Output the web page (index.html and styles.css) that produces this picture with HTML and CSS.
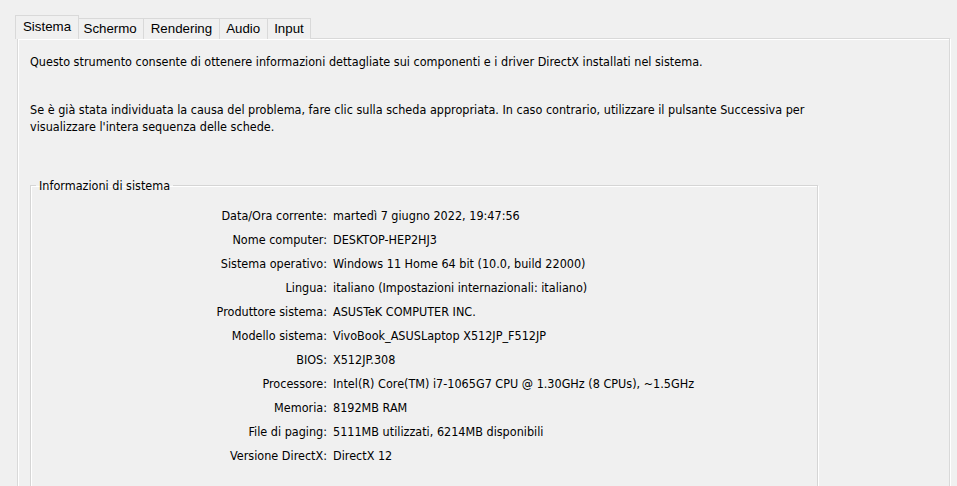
FILE: index.html
```html
<!DOCTYPE html>
<html lang="it">
<head>
<meta charset="utf-8">
<title>Strumento di diagnostica DirectX</title>
<link rel="stylesheet" href="styles.css">
</head>
<body>
<div class="window">
  <div class="tabs">
    <div class="tab active">Sistema</div>
    <div class="tab">Schermo</div>
    <div class="tab">Rendering</div>
    <div class="tab">Audio</div>
    <div class="tab">Input</div>
  </div>
  <div class="panel">
    <p class="intro">Questo strumento consente di ottenere informazioni dettagliate sui componenti e i driver DirectX installati nel sistema.</p>
    <p class="intro second">Se è già stata individuata la causa del problema, fare clic sulla scheda appropriata. In caso contrario, utilizzare il pulsante Successiva per<br>visualizzare l'intera sequenza delle schede.</p>
    <fieldset class="group">
      <legend>Informazioni di sistema</legend>
      <div class="info">
        <span class="label">Data/Ora corrente:</span><span class="value">martedì 7 giugno 2022, 19:47:56</span>
        <span class="label">Nome computer:</span><span class="value">DESKTOP-HEP2HJ3</span>
        <span class="label">Sistema operativo:</span><span class="value">Windows 11 Home 64 bit (10.0, build 22000)</span>
        <span class="label">Lingua:</span><span class="value">italiano (Impostazioni internazionali: italiano)</span>
        <span class="label">Produttore sistema:</span><span class="value">ASUSTeK COMPUTER INC.</span>
        <span class="label">Modello sistema:</span><span class="value">VivoBook_ASUSLaptop X512JP_F512JP</span>
        <span class="label">BIOS:</span><span class="value">X512JP.308</span>
        <span class="label">Processore:</span><span class="value">Intel(R) Core(TM) i7-1065G7 CPU @ 1.30GHz (8 CPUs), ~1.5GHz</span>
        <span class="label">Memoria:</span><span class="value">8192MB RAM</span>
        <span class="label">File di paging:</span><span class="value">5111MB utilizzati, 6214MB disponibili</span>
        <span class="label">Versione DirectX:</span><span class="value">DirectX 12</span>
      </div>
    </fieldset>
  </div>
</div>
</body>
</html>
```
FILE: styles.css
```css
html, body {
  margin: 0;
  padding: 0;
  background: #f0f0f0;
  overflow: hidden;
  height: 486px;
}

.window {
  padding-top: 15px;
  font-family: "DejaVu Sans Condensed", "DejaVu Sans", sans-serif;
  font-size: 12.5px;
  color: #000;
}

.tabs {
  display: flex;
  align-items: flex-end;
  margin-left: 15px;
  height: 24px;
  position: relative;
  z-index: 2;
  font-family: "Liberation Sans", Arial, sans-serif;
  font-size: 13.3px;
}

.tab {
  box-sizing: border-box;
  height: 21px;
  line-height: 20px;
  padding: 0 6.5px;
  border: 1px solid #d9d9d9;
  border-bottom: none;
  margin-left: -1px;
  background: #f0f0f0;
}

.tab.active {
  height: 24px;
  line-height: 22px;
  margin-left: 0;
  margin-right: -2px;
  padding: 0 7px;
  position: relative;
  z-index: 3;
  background: #f0f0f0;
}

.panel {
  box-sizing: border-box;
  margin-left: 17px;
  width: 933px;
  height: 470px;
  margin-top: -1px;
  border: 1px solid #d9d9d9;
  box-shadow: inset 1px 1px 0 #fff, 1px 1px 0 #fff;
  padding: 14px 12px 0;
}

.intro {
  margin: 0;
  line-height: 17px;
}

.intro.second {
  margin-top: 31px;
}

.group {
  box-sizing: border-box;
  width: 788px;
  margin: 42px 0 0;
  padding: 9px 0 0;
  border: 1px solid #d5d5d5;
  box-shadow: inset 1px 1px 0 #fff, 1px 1px 0 #fff;
  min-height: 320px;
}

.group legend {
  margin-left: 5px;
  padding: 0 3px;
  line-height: 17px;
}

.info {
  display: grid;
  grid-template-columns: 296px 1fr;
  column-gap: 6px;
  grid-auto-rows: 24px;
  align-items: center;
}

.label {
  text-align: right;
}
```
